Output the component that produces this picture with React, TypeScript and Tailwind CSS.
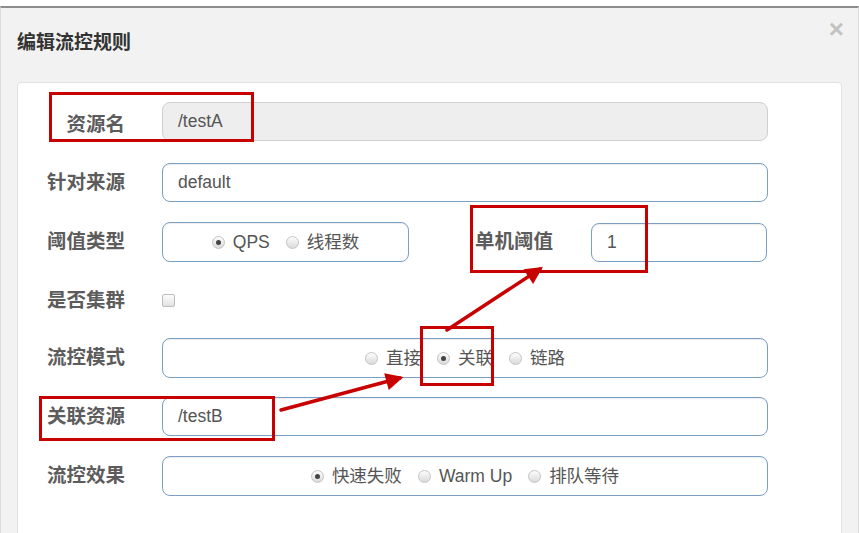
import React from "react";

const FONT = "font-['Liberation_Sans','Noto_Sans_CJK_SC',sans-serif]";

function Label({ children, className = "" }: { children: React.ReactNode; className?: string }) {
  return (
    <div className={`text-right text-[19.5px] font-bold leading-none text-[#5c5c5c] ${className}`}>
      {children}
    </div>
  );
}

function Radio({ label, checked = false }: { label: string; checked?: boolean }) {
  return (
    <span className="inline-flex items-center gap-[8px]">
      <span className="flex h-[13px] w-[13px] items-center justify-center rounded-full border border-[#c4c4c4] bg-gradient-to-b from-[#fdfdfd] to-[#dadada]">
        {checked && <span className="h-[5px] w-[5px] rounded-full bg-[#444]" />}
      </span>
      <span>{label}</span>
    </span>
  );
}

function RadioBox({ items, className = "" }: { items: { label: string; checked?: boolean }[]; className?: string }) {
  return (
    <div
      className={`flex h-[40px] items-center justify-center gap-[16px] rounded-[8px] border border-[#7aa0c6] bg-white text-[17.5px] text-[#555] shadow-[inset_0_1px_1px_rgba(0,0,0,0.075)] ${className}`}
    >
      {items.map((it) => (
        <Radio key={it.label} label={it.label} checked={it.checked} />
      ))}
    </div>
  );
}

function TextInput({ value, disabled = false, className = "" }: { value: string; disabled?: boolean; className?: string }) {
  return (
    <div
      className={`flex h-[39px] items-center rounded-[8px] border pl-[15px] text-[17.5px] text-[#555] ${
        disabled
          ? "border-[#cfcfcf] bg-[#eeeeee]"
          : "border-[#7aa0c6] bg-white shadow-[inset_0_1px_1px_rgba(0,0,0,0.075)]"
      } ${className}`}
    >
      {value}
    </div>
  );
}

function Annotations() {
  const red = "#c80000";
  return (
    <svg className="pointer-events-none absolute left-0 top-0" width="859" height="533">
      <defs>
        <marker id="head" viewBox="0 0 10 10" refX="8" refY="5" markerWidth="6" markerHeight="5" orient="auto">
          <path d="M0 0 L10 5 L0 10 z" fill={red} />
        </marker>
      </defs>
      <g fill="none" stroke={red} strokeWidth="3">
        <rect x="50.5" y="93.5" width="202" height="47" />
        <rect x="471.5" y="206.5" width="175" height="65" />
        <rect x="421.5" y="327.5" width="71" height="57" />
        <rect x="40.5" y="397.5" width="233" height="42" />
      </g>
      <g stroke={red} strokeWidth="3.5" strokeLinecap="round">
        <line x1="281" y1="410" x2="400" y2="378" markerEnd="url(#head)" />
        <line x1="447" y1="330" x2="540" y2="269" markerEnd="url(#head)" />
      </g>
    </svg>
  );
}

export default function App() {
  return (
    <div className={`relative h-[533px] w-[859px] overflow-hidden bg-white pt-[6px] ${FONT}`}>
      <div className="h-full border-x border-t-2 border-x-[#dcdcdc] border-t-[#8c8c8c] bg-[#f2f2f2]">
        {/* Header */}
        <div className="flex h-[74px] items-start justify-between pl-[16px] pr-[14px]">
          <h4 className="mt-[25px] text-[19px] font-bold leading-none text-[#333]">编辑流控规则</h4>
          <span className="mt-[8px] text-[26px] font-bold leading-none text-[#c2c2c2]">×</span>
        </div>

        {/* Form panel */}
        <div className="mx-[16px] h-[460px] rounded-t-[4px] border border-[#e2e2e2] bg-white pt-[19px]">
          <div className="mb-[22px] flex items-center">
            <Label className="w-[107px] pt-[6px]">资源名</Label>
            <TextInput value="/testA" disabled className="ml-[37px] w-[606px]" />
          </div>

          <div className="mb-[20px] flex items-center">
            <Label className="w-[107px]">针对来源</Label>
            <TextInput value="default" className="ml-[37px] w-[606px]" />
          </div>

          <div className="mb-[19px] flex items-center">
            <Label className="w-[107px]">阈值类型</Label>
            <RadioBox
              className="ml-[37px] w-[247px]"
              items={[{ label: "QPS", checked: true }, { label: "线程数" }]}
            />
            <Label className="w-[144px]">单机阈值</Label>
            <TextInput value="1" className="ml-[38px] w-[176px]" />
          </div>

          <div className="mb-[18px] flex h-[39px] items-center">
            <Label className="w-[107px]">是否集群</Label>
            <span className="ml-[37px] h-[13px] w-[13px] rounded-[2px] border border-[#bdbdbd] bg-gradient-to-b from-[#fcfcfc] to-[#e2e2e2]" />
          </div>

          <div className="mb-[19px] flex items-center">
            <Label className="w-[107px]">流控模式</Label>
            <RadioBox
              className="ml-[37px] w-[606px]"
              items={[{ label: "直接" }, { label: "关联", checked: true }, { label: "链路" }]}
            />
          </div>

          <div className="mb-[20px] flex items-center">
            <Label className="w-[107px]">关联资源</Label>
            <TextInput value="/testB" className="ml-[37px] w-[606px]" />
          </div>

          <div className="flex items-center">
            <Label className="w-[107px]">流控效果</Label>
            <RadioBox
              className="ml-[37px] w-[606px]"
              items={[{ label: "快速失败", checked: true }, { label: "Warm Up" }, { label: "排队等待" }]}
            />
          </div>
        </div>
      </div>
      <Annotations />
    </div>
  );
}
